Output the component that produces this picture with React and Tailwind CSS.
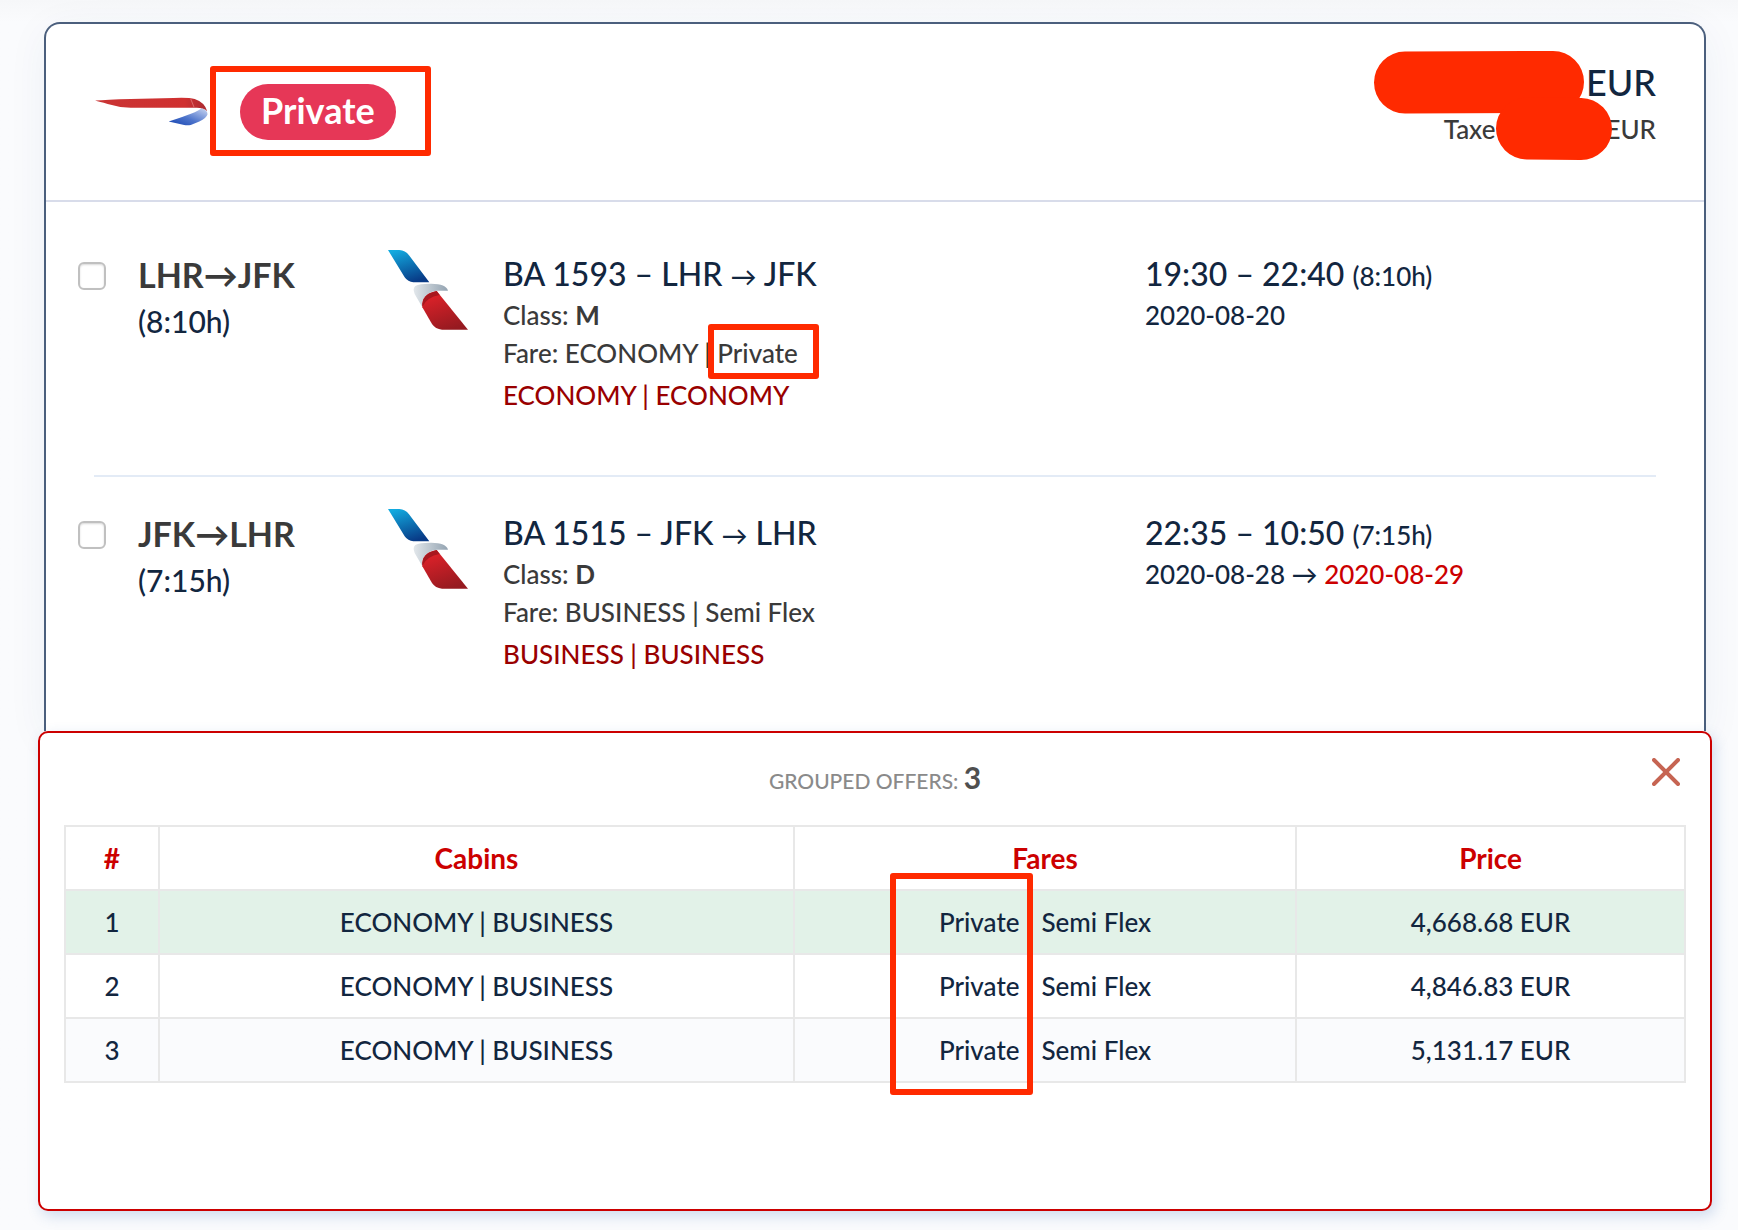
import React from 'react';

const flights = [
  {
    id: 'outbound',
    from: 'LHR',
    to: 'JFK',
    duration: '(8:10h)',
    number: 'BA 1593',
    bookingClass: 'M',
    fare: 'ECONOMY',
    fareType: 'Private',
    highlighted: true,
    cabins: 'ECONOMY | ECONOMY',
    times: '19:30 – 22:40',
    departs: '2020-08-20',
    spacing: 'pt-[46px] pb-[61px]',
  },
  {
    id: 'inbound',
    from: 'JFK',
    to: 'LHR',
    duration: '(7:15h)',
    number: 'BA 1515',
    bookingClass: 'D',
    fare: 'BUSINESS',
    fareType: 'Semi Flex',
    highlighted: false,
    cabins: 'BUSINESS | BUSINESS',
    times: '22:35 – 10:50',
    departs: '2020-08-28',
    arrives: '2020-08-29',
    spacing: 'pt-[30px] pb-[58px]',
  },
];

const offers = [
  { id: 1, price: '4,668.68 EUR', row: 'bg-[#e2f2e8]' },
  { id: 2, price: '4,846.83 EUR', row: 'bg-white' },
  { id: 3, price: '5,131.17 EUR', row: 'bg-[#fafbfd]' },
];

function BritishAirwaysLogo() {
  return (
    <svg viewBox="190 288 346 94" className="h-[31px] w-[115px]" role="img" aria-label="British Airways">
      <defs>
        <linearGradient id="ba-blue" x1="0" x2="1" y1="1" y2="0">
          <stop offset="0" stopColor="#1442b0" />
          <stop offset="0.45" stopColor="#4d74cb" />
          <stop offset="1" stopColor="#cdd8f2" />
        </linearGradient>
        <linearGradient id="ba-red" x1="0" x2="1">
          <stop offset="0" stopColor="#c93434" />
          <stop offset="0.8" stopColor="#d03030" />
          <stop offset="1" stopColor="#a92a30" />
        </linearGradient>
      </defs>
      <path d="M415 365 Q462 350 494 337 Q510 329 514 325 Q532 329 533 343 Q530 354 508 365 L482 376 Q472 378 462 376 Z" fill="url(#ba-blue)" />
      <path d="M192 302 Q225 299 300 297 L430 294 Q475 292 494 297 Q524 307 532 334 Q520 324 500 324 L300 324 Q262 322 230 312 Q205 306 192 302 Z" fill="url(#ba-red)" />
      <path d="M482 297 L492 322" stroke="#e78a8a" strokeWidth="2" fill="none" />
    </svg>
  );
}

function AmericanAirlinesLogo({ id }) {
  return (
    <svg viewBox="1044 60 240 240" className="size-[80px]" role="img" aria-label="American Airlines">
      <defs>
        <linearGradient id={`${id}-blue`} x1="0.2" x2="0.6" y1="0" y2="1">
          <stop offset="0" stopColor="#12abe0" />
          <stop offset="1" stopColor="#083a86" />
        </linearGradient>
        <linearGradient id={`${id}-red`} x1="0.2" x2="0.6" y1="0" y2="1">
          <stop offset="0" stopColor="#e3222a" />
          <stop offset="1" stopColor="#961a20" />
        </linearGradient>
        <linearGradient id={`${id}-grey`} x1="0" x2="1">
          <stop offset="0" stopColor="#e2e7eb" />
          <stop offset="1" stopColor="#93a3b1" />
        </linearGradient>
      </defs>
      <path d="M1044 60 H1078 Q1096 61 1107 76 L1168 157 H1120 Q1104 156 1094 142 Z" fill={`url(#${id}-blue)`} />
      <path d="M1147 232 L1124 192 Q1117 176 1126 168 Q1138 161 1170 161 Q1218 160 1224 182 L1190 182 Q1156 186 1147 216 Z" fill={`url(#${id}-grey)`} />
      <path d="M1147 232 Q1143 192 1190 183 L1284 299 H1206 Q1186 297 1176 282 Z" fill={`url(#${id}-red)`} />
      <path d="M1147 230 Q1144 192 1190 183 L1199 195 Q1160 202 1147 230 Z" fill="#a8181f" />
    </svg>
  );
}

function Redaction() {
  return (
    <svg viewBox="1374 51 240 110" className="absolute -top-[3px] right-[42px] h-[110px] w-[240px]" aria-hidden="true">
      <path d="M1405 82.5 L1553 82" stroke="#ff2a00" strokeWidth="62" strokeLinecap="round" />
      <path d="M1527 128.5 L1581 129" stroke="#ff2a00" strokeWidth="62" strokeLinecap="round" />
    </svg>
  );
}

function Flight({ flight }) {
  return (
    <article className={`grid grid-cols-[60px_250px_115px_642fr_511fr] items-start pr-12 pl-8 ${flight.spacing}`}>
      <input
        type="checkbox"
        id={flight.id}
        className="mt-[14px] size-7 appearance-none rounded-md border-2 border-[#c0c0c0] bg-white shadow-[inset_0_1px_2px_rgba(0,0,0,0.15)]"
      />
      <label htmlFor={flight.id}>
        <span className="block text-[34px] leading-[54px] font-bold text-[#3a3a3a]">
          {flight.from}→{flight.to}
        </span>
        <span className="block text-[30px] leading-[38px]">{flight.duration}</span>
      </label>
      <div className="pt-[2px]">
        <AmericanAirlinesLogo id={flight.id} />
      </div>
      <div className="pt-1 text-[26px] leading-[38px] text-[#3a3a3a]">
        <h2 className="text-[32px] leading-[44px] text-[#12263f]">
          {flight.number} – {flight.from} <span className="text-[26px] leading-none">→</span> {flight.to}
        </h2>
        <p>
          Class: <b>{flight.bookingClass}</b>
        </p>
        <p>
          Fare: {flight.fare} |{' '}
          <span className="relative">
            {flight.fareType}
            {flight.highlighted && (
              <span className="absolute -top-[13px] -right-[21px] -bottom-[10px] -left-[9px] rounded-[3px] border-[6px] border-[#ff2a00]" />
            )}
          </span>
        </p>
        <p className="mt-1 text-[#990000]">{flight.cabins}</p>
      </div>
      <div className="pt-1 text-[26px] leading-[38px]">
        <p className="text-[32px] leading-[44px]">
          {flight.times} <span className="text-[26px] leading-none">{flight.duration}</span>
        </p>
        <p>
          {flight.departs}
          {flight.arrives && (
            <>
              {' → '}
              <span className="text-[#cc0000]">{flight.arrives}</span>
            </>
          )}
        </p>
      </div>
    </article>
  );
}

export default function App() {
  return (
    <main className="min-h-screen bg-[#fafbfd] bg-linear-to-b from-[#f6f7f9] to-[#fafbfd] to-[22px] pt-[22px] pr-[26px] pb-5 pl-[38px] font-['Lato',sans-serif] font-medium text-[#12263f]">
      <section className="mx-[6px] rounded-t-2xl border-2 border-b-0 border-[#4b5f7d] bg-white shadow-[0_8px_40px_rgba(30,60,120,0.06)]">
        <header className="flex h-[178px] items-start justify-between border-b-2 border-[#d8dcea] px-12">
          <div className="flex pt-[42px]">
            <div className="pt-[30px]">
              <BritishAirwaysLogo />
            </div>
            <div className="ml-[1px] rounded-[3px] border-[6px] border-[#ff2a00] pt-3 pr-[29px] pb-[10px] pl-6">
              <span className="block rounded-full bg-[#e63757] px-[21px] pb-[4px] text-[36px] leading-[52px] font-bold text-white">
                Private
              </span>
            </div>
          </div>
          <div className="relative mt-[30px] text-right">
            <p className="text-[36px] leading-[56px]">EUR</p>
            <p className="flex justify-end gap-[110px] text-[26px] leading-[38px] text-[#3a3a3a]">
              <span>Taxe</span>
              <span>EUR</span>
            </p>
            <Redaction />
          </div>
        </header>
        <Flight flight={flights[0]} />
        <hr className="mx-12 border-t-2 border-[#e3ebf6]" />
        <Flight flight={flights[1]} />
      </section>

      <section className="relative rounded-[10px] border-2 border-[#cc0000] bg-white px-6 pb-[126px] shadow-[3px_5px_14px_rgba(60,110,180,0.22)]">
        <div className="flex h-[92px] items-center justify-center">
          <h3 className="text-[21px] leading-8 text-[#8a8a8a]">
            GROUPED OFFERS: <b className="text-[30px] leading-none text-[#4f4f4f]">3</b>
          </h3>
          <button type="button" aria-label="Close" className="absolute top-[21px] right-[26px] size-9 p-1">
            <svg viewBox="0 0 28 28" className="size-7" aria-hidden="true">
              <path d="M2 2 L26 26 M26 2 L2 26" stroke="#c66452" strokeWidth="4" strokeLinecap="round" />
            </svg>
          </button>
        </div>
        <table className="w-full table-fixed border-collapse text-center text-[26px] leading-[38px]">
          <colgroup>
            <col className="w-[5.8%]" />
            <col className="w-[39.2%]" />
            <col className="w-[31%]" />
            <col className="w-[24%]" />
          </colgroup>
          <thead>
            <tr className="h-16 text-[28px] text-[#cc0000]">
              {['#', 'Cabins', 'Fares', 'Price'].map((title) => (
                <th key={title} scope="col" className="border-2 border-[#e8e8e8] font-bold">
                  {title}
                </th>
              ))}
            </tr>
          </thead>
          <tbody>
            {offers.map((offer) => (
              <tr key={offer.id} className={`h-16 ${offer.row}`}>
                <td className="border-2 border-[#e8e8e8]">{offer.id}</td>
                <td className="border-2 border-[#e8e8e8]">ECONOMY | BUSINESS</td>
                <td className="border-2 border-[#e8e8e8]">
                  <span className="relative inline-block">
                    Private
                    {offer.id === 1 && (
                      <span className="absolute -top-[30px] -right-[13px] -left-[49px] z-10 h-[222px] rounded-[3px] border-[6px] border-[#ff2a00]" />
                    )}
                  </span>
                  <span className="ml-[22px]">Semi Flex</span>
                </td>
                <td className="border-2 border-[#e8e8e8]">{offer.price}</td>
              </tr>
            ))}
          </tbody>
        </table>
      </section>
    </main>
  );
}
